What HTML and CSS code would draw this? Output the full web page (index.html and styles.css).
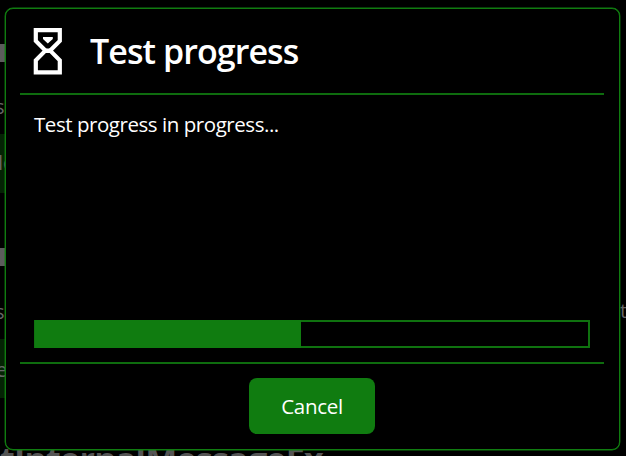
FILE: index.html
```html
<!DOCTYPE html>
<html lang="en">
<head>
<meta charset="utf-8">
<title>Test progress</title>
<link rel="stylesheet" href="styles.css">
</head>
<body>
<div class="backdrop" aria-hidden="true">
  <i class="bar bar-a"></i>
  <i class="bar bar-b"></i>
  <span class="bit s-a">s</span>
  <span class="tile tile-a"><span>le</span></span>
  <span class="bit s-b">s</span>
  <span class="tile tile-b"><span>e</span></span>
  <span class="bit right-t">t</span>
  <span class="heading">tInternalMessageEx</span>
</div>
<main class="dialog">
  <header class="head">
    <svg class="icon" viewBox="0 0 30 48">
      <path d="M2.8 2.2H26.8V13L17.2 22.6L26.8 32.4V44.4H2.8V32.4L12.4 22.6L2.8 13Z" fill="none" stroke="#fff" stroke-width="4.2"/>
      <path d="M12.2 20.5H17.4V25H12.2Z" fill="#fff"/>
      <path d="M10 9H19.8V11L14.8 15.4L10 11Z" fill="#fff"/>
    </svg>
    <h1>Test progress</h1>
  </header>
  <section class="content">
    <p>Test progress in progress...</p>
    <div class="progress"><div class="fill"></div></div>
  </section>
  <footer class="foot"><button>Cancel</button></footer>
</main>
</body>
</html>
```
FILE: styles.css
```css
* { box-sizing: border-box; }
body {
  margin: 0;
  height: 456px;
  overflow: hidden;
  background: #000;
  color: #fff;
  font-family: "Open Sans", "Noto Sans", sans-serif;
}
.dialog {
  position: relative;
  width: 615px;
  height: 442px;
  margin: 8px 0 0 5px;
  padding: 0 15px 0 14px;
  display: flex;
  flex-direction: column;
  border: 1px solid #107c10;
  border-radius: 8px;
  box-shadow: 0 0 0 .4px #107c10;
  background: #000;
}
.head {
  height: 86px;
  display: flex;
  align-items: center;
  padding-left: 13px;
  border-bottom: 2px solid #0e6c0e;
}
.icon { width: 30px; height: 48px; margin: 2px 27px 0 0; }
h1 {
  margin: 0;
  font-size: 34px;
  line-height: 46px;
  font-weight: 600;
  letter-spacing: -.93px;
  white-space: nowrap;
}
.content {
  flex: 1;
  display: flex;
  flex-direction: column;
  justify-content: space-between;
  padding: 14px;
}
p { margin: 0; font-size: 20.5px; line-height: 30px; letter-spacing: -.45px; }
.progress {
  height: 28px;
  border: 2px solid #0f720f;
}
.fill { width: 266px; height: 28px; margin: -2px 0 0 -1px; background: #107c10; }
.foot {
  height: 87px;
  display: flex;
  justify-content: center;
  padding-top: 14px;
  border-top: 2px solid #0e6c0e;
}
button {
  width: 126px;
  height: 56px;
  padding: 0 0 1px;
  border: 0;
  border-radius: 8px;
  background: #107c10;
  color: #fff;
  font: 20.5px "Open Sans", "Noto Sans", sans-serif;
  letter-spacing: -.3px;
}
.backdrop { position: absolute; inset: 0; overflow: hidden; color: #666; }
.backdrop > * { position: absolute; }
.bar { left: 0; width: 5px; height: 18px; background: #5c5c5c; }
.bar-a { top: 44px; }
.bar-b { top: 248px; }
.bit { font-size: 20px; line-height: 28px; }
.s-a { left: -5px; top: 93px; }
.s-b { left: -5px; top: 298px; }
.right-t { left: 620px; top: 297px; }
.tile { left: -40px; width: 60px; height: 59px; background: #042304; font-size: 20px; line-height: 58px; }
.tile span { position: absolute; left: 36px; }
.tile-a { top: 134px; }
.tile-a span { left: 38px; }
.tile-b { top: 339px; }
.tile-b span { top: 2px; }
.heading { left: 0; top: 439px; font-size: 34px; line-height: 40px; font-weight: 700; color: #555; letter-spacing: -.75px; }
```
